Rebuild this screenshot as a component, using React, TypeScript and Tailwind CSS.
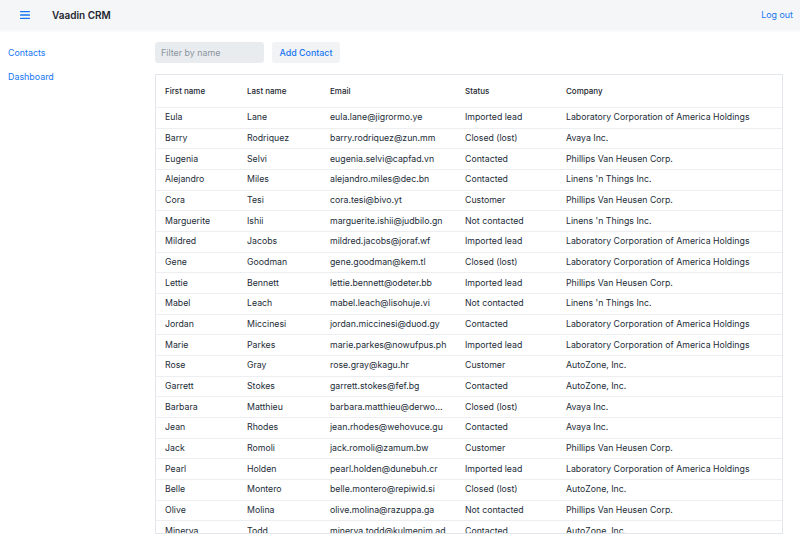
const CONTACTS = [
  ['Eula', 'Lane', 'eula.lane@jigrormo.ye', 'Imported lead', 'Laboratory Corporation of America Holdings'],
  ['Barry', 'Rodriquez', 'barry.rodriquez@zun.mm', 'Closed (lost)', 'Avaya Inc.'],
  ['Eugenia', 'Selvi', 'eugenia.selvi@capfad.vn', 'Contacted', 'Phillips Van Heusen Corp.'],
  ['Alejandro', 'Miles', 'alejandro.miles@dec.bn', 'Contacted', "Linens 'n Things Inc."],
  ['Cora', 'Tesi', 'cora.tesi@bivo.yt', 'Customer', 'Phillips Van Heusen Corp.'],
  ['Marguerite', 'Ishii', 'marguerite.ishii@judbilo.gn', 'Not contacted', "Linens 'n Things Inc."],
  ['Mildred', 'Jacobs', 'mildred.jacobs@joraf.wf', 'Imported lead', 'Laboratory Corporation of America Holdings'],
  ['Gene', 'Goodman', 'gene.goodman@kem.tl', 'Closed (lost)', 'Laboratory Corporation of America Holdings'],
  ['Lettie', 'Bennett', 'lettie.bennett@odeter.bb', 'Imported lead', 'Phillips Van Heusen Corp.'],
  ['Mabel', 'Leach', 'mabel.leach@lisohuje.vi', 'Not contacted', "Linens 'n Things Inc."],
  ['Jordan', 'Miccinesi', 'jordan.miccinesi@duod.gy', 'Contacted', 'Laboratory Corporation of America Holdings'],
  ['Marie', 'Parkes', 'marie.parkes@nowufpus.ph', 'Imported lead', 'Laboratory Corporation of America Holdings'],
  ['Rose', 'Gray', 'rose.gray@kagu.hr', 'Customer', 'AutoZone, Inc.'],
  ['Garrett', 'Stokes', 'garrett.stokes@fef.bg', 'Contacted', 'AutoZone, Inc.'],
  ['Barbara', 'Matthieu', 'barbara.matthieu@derwogi.jm', 'Closed (lost)', 'Avaya Inc.'],
  ['Jean', 'Rhodes', 'jean.rhodes@wehovuce.gu', 'Contacted', 'Avaya Inc.'],
  ['Jack', 'Romoli', 'jack.romoli@zamum.bw', 'Customer', 'Phillips Van Heusen Corp.'],
  ['Pearl', 'Holden', 'pearl.holden@dunebuh.cr', 'Imported lead', 'Laboratory Corporation of America Holdings'],
  ['Belle', 'Montero', 'belle.montero@repiwid.si', 'Closed (lost)', 'AutoZone, Inc.'],
  ['Olive', 'Molina', 'olive.molina@razuppa.ga', 'Not contacted', 'Phillips Van Heusen Corp.'],
  ['Minerva', 'Todd', 'minerva.todd@kulmenim.ad', 'Contacted', 'AutoZone, Inc.'],
]

const COLS = ['First name', 'Last name', 'Email', 'Status', 'Company']
const GRID = 'grid grid-cols-[82px_83px_135px_101px_1fr]'

export default function App() {
  return (
    <div className="h-[542px] overflow-hidden bg-white text-[#1a2533] font-['Inter',sans-serif]">
      <header className="h-[30px] flex items-center bg-[#f5f6f8] shadow-[0_1px_2px_rgba(0,0,0,0.04)]">
        <svg className="ml-[20px] w-[10px] h-[8px] text-[#1676f3]" viewBox="0 0 10 8" fill="currentColor">
          <rect x="0" y="0" width="10" height="1.3" rx="0.5" />
          <rect x="0" y="3.35" width="10" height="1.3" rx="0.5" />
          <rect x="0" y="6.7" width="10" height="1.3" rx="0.5" />
        </svg>
        <h1 className="ml-[22px] text-[10px] font-semibold text-[#1d2630]">Vaadin CRM</h1>
        <a className="ml-auto mr-[7px] text-[8.9px] text-[#1676f3]">Log out</a>
      </header>

      <div className="flex">
        <nav className="w-[145px] shrink-0 flex flex-col gap-[12px] pt-[17px] pl-[8px] text-[8.9px] text-[#1676f3]">
          <a className="leading-[12px]">Contacts</a>
          <a className="leading-[12px]">Dashboard</a>
        </nav>

        <main className="flex-1 pt-[12px] pl-[10px] pr-[17px]">
          <div className="flex gap-[8px]">
            <div className="w-[109px] h-[21px] rounded-[3px] bg-[#e9ecef] flex items-center px-[6px] text-[8.9px] text-[#8c949d]">
              Filter by name
            </div>
            <button className="w-[68px] h-[21px] rounded-[3px] bg-[#f1f3f5] text-[8.9px] font-medium text-[#1676f3]">
              Add Contact
            </button>
          </div>

          <div className="mt-[11px] h-[460px] overflow-hidden border border-[#e3e6ea] bg-white">
            <div className={`${GRID} h-[32px] items-center text-[8px] font-medium text-[#1d2630]`}>
              {COLS.map((c) => (
                <div key={c} className="px-[9px]">{c}</div>
              ))}
            </div>
            {CONTACTS.map((row) => (
              <div key={row[2]} className={`${GRID} h-[20.68px] items-center border-t border-[#eceef1] text-[8.75px] text-[#232c37]`}>
                {row.map((cell, i) => (
                  <div key={i} className="px-[9px] truncate">{cell}</div>
                ))}
              </div>
            ))}
          </div>
        </main>
      </div>
    </div>
  )
}
